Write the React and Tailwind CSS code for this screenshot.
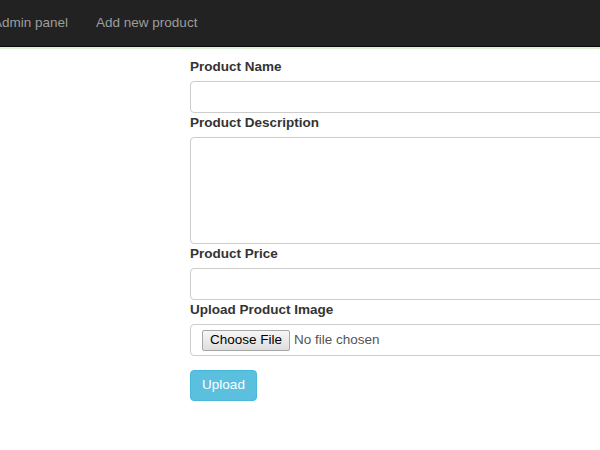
import React from "react";

function Label({ children }) {
  return (
    <label className="block h-[19px] mb-[5px] text-[13.5px] leading-[19px] font-bold text-[#333]">
      {children}
    </label>
  );
}

export default function App() {
  return (
    <div className="w-[600px] h-[450px] overflow-hidden bg-white font-['Liberation_Sans',Arial,sans-serif]">
      <nav className="h-[47px] bg-[#222] border-b border-[#080808] flex items-center text-[13.5px] text-[#9d9d9d] whitespace-nowrap">
        <a className="-ml-[7px]">Admin panel</a>
        <a className="ml-[28px]">Add new product</a>
      </nav>
      <div className="h-[2px] bg-[#dff0d8]" />

      <form className="pl-[190px] pt-[8px] w-[640px]">
        <Label>Product Name</Label>
        <input className="block w-full h-[32px] border border-[#ccc] rounded-[4px]" />

        <Label>Product Description</Label>
        <textarea className="block w-full h-[107px] border border-[#ccc] rounded-[4px] resize-none" />

        <Label>Product Price</Label>
        <input className="block w-full h-[32px] border border-[#ccc] rounded-[4px]" />

        <Label>Upload Product Image</Label>
        <div className="flex items-center w-full h-[32px] border border-[#ccc] rounded-[4px] pl-[11px]">
          <span className="h-[21px] px-[7px] flex items-center border border-[#a6a6a6] rounded-[2px] bg-gradient-to-b from-[#f6f6f6] to-[#dedede] text-[13.5px] text-black">
            Choose File
          </span>
          <span className="ml-[4px] text-[13.5px] text-[#555]">No file chosen</span>
        </div>

        <button
          type="button"
          className="block mt-[14px] w-[67px] h-[31px] bg-[#5bc0de] border border-[#46b8da] rounded-[4px] text-white text-[13.5px]"
        >
          Upload
        </button>
      </form>
    </div>
  );
}
